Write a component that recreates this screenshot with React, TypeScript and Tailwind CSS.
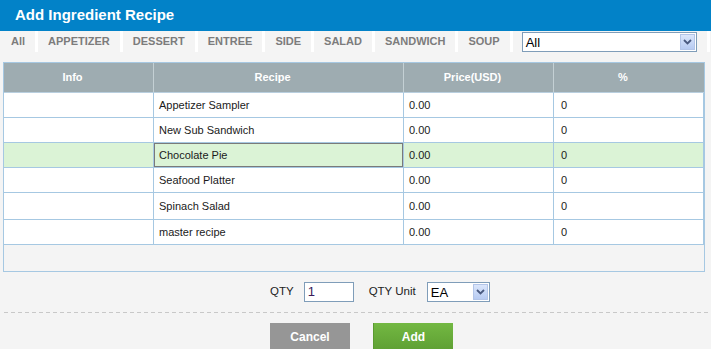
import React from "react";

const tabs = ["All", "APPETIZER", "DESSERT", "ENTREE", "SIDE", "SALAD", "SANDWICH", "SOUP"];

const rows: { name: string; h: string; sel?: boolean }[] = [
  { name: "Appetizer Sampler", h: "h-[25px]" },
  { name: "New Sub Sandwich", h: "h-[25px]" },
  { name: "Chocolate Pie", h: "h-[25px]", sel: true },
  { name: "Seafood Platter", h: "h-[25px]" },
  { name: "Spinach Salad", h: "h-[27px]" },
  { name: "master recipe", h: "h-[25px]" },
];

function ArrowBtn({ className }: { className: string }) {
  return (
    <div
      className={`flex items-center justify-center border border-[#b3c5e8] bg-gradient-to-b from-[#dbe6fb] to-[#b7cbf2] ${className}`}
    >
      <svg width="9" height="6" viewBox="0 0 9 6">
        <path d="M1 1 L4.5 4.5 L8 1" fill="none" stroke="#4a5a80" strokeWidth="1.8" />
      </svg>
    </div>
  );
}

export default function App() {
  return (
    <div
      className="w-[711px] h-[349px] overflow-hidden bg-[#f4f4f4] flex flex-col"
      style={{ fontFamily: '"Liberation Sans", Arial, sans-serif' }}
    >
      <div className="h-[31px] shrink-0 bg-[#0282c8] pl-[15px] flex items-center text-white font-bold text-[15px]">
        Add Ingredient Recipe
      </div>

      <div className="h-[21px] shrink-0 flex items-stretch pl-[1px]">
        {tabs.map((t) => (
          <React.Fragment key={t}>
            <div className="px-[10px] flex items-center text-[11px] font-bold text-[#7c7c7c]">{t}</div>
            <div className="w-[3px] bg-white" />
          </React.Fragment>
        ))}
        <div className="ml-[9px] mt-[1px] h-[20px] w-[175px] border border-[#7f9db9] bg-white flex items-center justify-between pl-[3px] pr-[1px]">
          <span className="text-[13px] text-black leading-none">All</span>
          <ArrowBtn className="w-[15px] h-[16px]" />
        </div>
        <div className="ml-[10px] w-[3px] bg-white" />
      </div>

      <div className="mt-[10px] ml-[3px] w-[702px] border border-[#a6c8e2] flex flex-col text-[11px]">
        <div className="grid grid-cols-[150px_250px_150px_150px] h-[30px] bg-[#9eacb1] border-b border-[#b9cfdf] text-white font-bold">
          <div className="flex items-center justify-center pr-[12px] border-r border-[#c4d0d4]">Info</div>
          <div className="flex items-center justify-center pr-[12px] border-r border-[#c4d0d4]">Recipe</div>
          <div className="flex items-center justify-center pr-[12px] border-r border-[#c4d0d4]">Price(USD)</div>
          <div className="flex items-center justify-center pr-[12px]">%</div>
        </div>
        {rows.map((r) => (
          <div
            key={r.name}
            className={`grid grid-cols-[150px_250px_150px_150px] ${r.h} border-b border-[#a6c8e2] text-[#1a1a1a] ${
              r.sel ? "bg-[#dbf3d6]" : "bg-white"
            }`}
          >
            <div className="border-r border-[#a6c8e2]" />
            <div
              className={`flex items-center pl-[5px] border-r border-[#a6c8e2] ${
                r.sel ? "shadow-[inset_0_0_0_1px_#7a7a7a]" : ""
              }`}
            >
              {r.name}
            </div>
            <div className="flex items-center pl-[5px] border-r border-[#a6c8e2]">0.00</div>
            <div className="flex items-center pl-[7px] border-r border-[#a6c8e2]">0</div>
          </div>
        ))}
        <div className="h-[26px]" />
      </div>

      <div className="mt-[10px] h-[20px] pl-[270px] flex items-center text-[11.5px] text-[#222]">
        <span>QTY</span>
        <div className="ml-[10px] w-[50px] h-[20px] border border-[#7f9db9] bg-white flex items-center pl-[3px] text-[13px] text-[#3a1a5a]">
          1
        </div>
        <span className="ml-[15px]">QTY Unit</span>
        <div className="ml-[11px] w-[63px] h-[20px] border border-[#7f9db9] bg-white flex items-center justify-between pl-[3px] pr-[1px]">
          <span className="text-[13px] text-black leading-none">EA</span>
          <ArrowBtn className="w-[15px] h-[16px]" />
        </div>
      </div>

      <div className="mt-[10px] ml-[4px] h-[1px] shrink-0 bg-[repeating-linear-gradient(90deg,#c8c8c8_0px,#c8c8c8_4px,transparent_4px,transparent_7px)]" />

      <div className="mt-[10px] pl-[270px] flex gap-[23px]">
        <div className="w-[80px] h-[28px] bg-[#969696] text-white font-bold text-[12px] flex items-center justify-center">
          Cancel
        </div>
        <div className="w-[80px] h-[28px] bg-gradient-to-b from-[#73b842] to-[#5e9f33] border-l border-[#5a9a30] text-white font-bold text-[12px] flex items-center justify-center">
          Add
        </div>
      </div>
    </div>
  );
}
